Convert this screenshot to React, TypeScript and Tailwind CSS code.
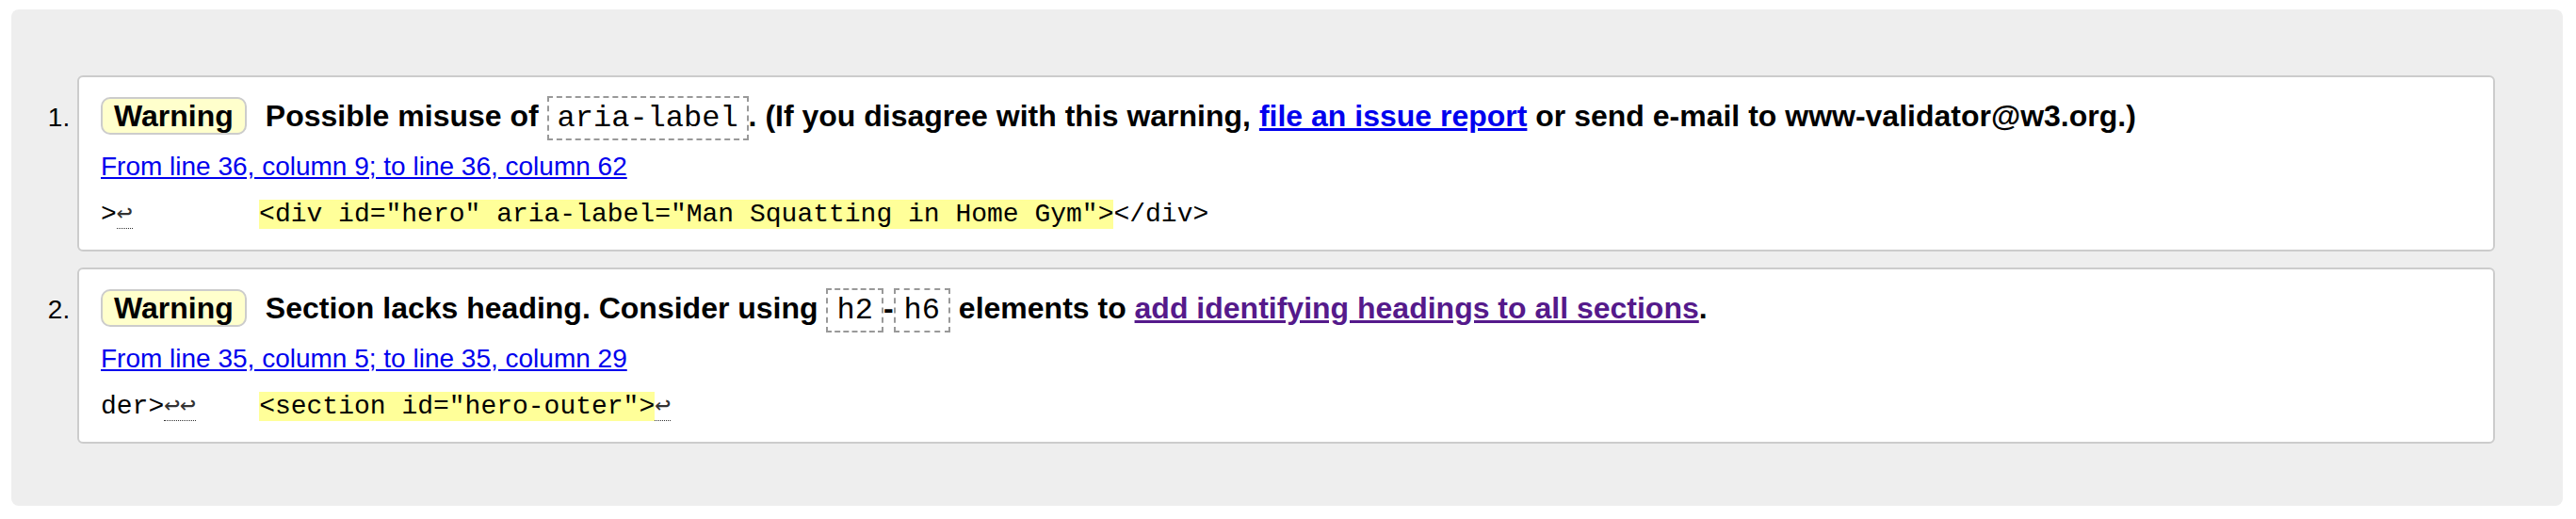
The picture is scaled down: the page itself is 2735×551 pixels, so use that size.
import React from "react";

const sans = { fontFamily: '"Liberation Sans", Arial, sans-serif' };

function Code({ children }: { children: React.ReactNode }) {
  return (
    <code className="font-['Liberation_Mono',monospace] font-normal text-[32px] px-[9px] py-[3px] border-2 border-dashed border-[#999]">
      {children}
    </code>
  );
}

function Lf({ n = 1 }: { n?: number }) {
  return (
    <span className="font-['DejaVu_Sans_Mono',monospace] text-[#333] border-b border-dotted border-[#333]">
      {"↩".repeat(n)}
    </span>
  );
}

function Badge() {
  return (
    <strong className="inline-block mr-[20px] px-[12px] leading-[36px] border-2 border-[#ccc] rounded-[10px] bg-[#ffffcc]">
      Warning
    </strong>
  );
}

const messages = [
  {
    text: (
      <>
        Possible misuse of <Code>aria-label</Code>. (If you disagree with this warning,{" "}
        <a href="#" className="text-[#0000ee] underline">
          file an issue report
        </a>{" "}
        or send e-mail to www-validator@w3.org.)
      </>
    ),
    location: "From line 36, column 9; to line 36, column 62",
    before: (
      <>
        {">"}
        <Lf />
        {"        "}
      </>
    ),
    mark: '<div id="hero" aria-label="Man Squatting in Home Gym">',
    after: <>{"</div>"}</>,
  },
  {
    text: (
      <>
        Section lacks heading. Consider using <Code>h2</Code>-<Code>h6</Code> elements to{" "}
        <a href="#" className="text-[#551a8b] underline">
          add identifying headings to all sections
        </a>
        .
      </>
    ),
    location: "From line 35, column 5; to line 35, column 29",
    before: (
      <>
        {"der>"}
        <Lf n={2} />
        {"    "}
      </>
    ),
    mark: '<section id="hero-outer">',
    after: <Lf />,
  },
];

export default function App() {
  return (
    <div className="bg-white pt-[10px] pl-[12px] pr-[14px] text-black" style={sans}>
      <div className="bg-[#eeeeee] rounded-[8px] pt-[70px] pl-[70px] pr-[72px] pb-[66px]">
        <ol className="list-decimal list-outside flex flex-col gap-[17px]">
          {messages.map((m, i) => (
            <li
              key={i}
              className="bg-white border-2 border-[#ccc] rounded-[6px] pl-[23px] pt-[21px] pb-[23px] text-[28px]"
            >
              <p className="h-[40px] font-bold text-[32px] leading-[40px] whitespace-nowrap">
                <Badge />
                {m.text}
              </p>
              <p className="h-[32px] mt-[18px] leading-[32px]">
                <a href="#" className="text-[#0000ee] underline">
                  {m.location}
                </a>
              </p>
              <p className="h-[32px] mt-[17px] leading-[32px] font-['Liberation_Mono',monospace] text-[28px] whitespace-pre">
                {m.before}
                <b className="font-normal bg-[#ffff99]">{m.mark}</b>
                {m.after}
              </p>
            </li>
          ))}
        </ol>
      </div>
    </div>
  );
}
